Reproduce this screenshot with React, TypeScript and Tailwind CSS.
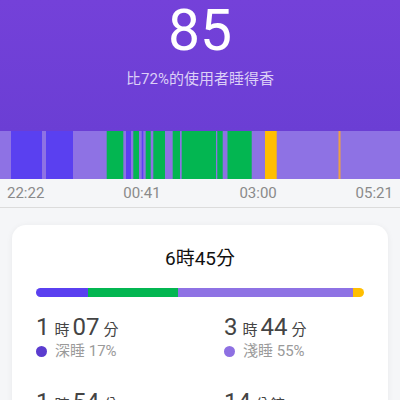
import React from 'react';

const segments: { x: number; w: number; c: string }[] = [
  { x: 11, w: 31, c: '#5a40f0' },
  { x: 46, w: 27, c: '#5a40f0' },
  { x: 106.7, w: 16.6, c: '#03b651' },
  { x: 126, w: 5, c: '#5a40f0' },
  { x: 133.3, w: 5.7, c: '#03b651' },
  { x: 141.7, w: 1.6, c: '#5a40f0' },
  { x: 145.7, w: 5, c: '#03b651' },
  { x: 153.3, w: 11.7, c: '#03b651' },
  { x: 172.7, w: 7.3, c: '#03b651' },
  { x: 181.7, w: 34.3, c: '#03b651' },
  { x: 217.3, w: 5.4, c: '#03b651' },
  { x: 227.5, w: 24.2, c: '#03b651' },
  { x: 265, w: 11.7, c: '#ffbe00' },
  { x: 338.5, w: 2, c: '#f0a040' },
];

const SleepChart = () => (
  <svg width="400" height="48" viewBox="0 0 400 48" className="block">
    <rect x="0" y="0" width="400" height="48" fill="#8e72e4" />
    {segments.map((s, i) => (
      <rect key={i} x={s.x} y="0" width={s.w} height="48" fill={s.c} />
    ))}
  </svg>
);

const Stat = ({
  h,
  m,
  unit,
  dot,
  label,
}: {
  h?: string;
  m: string;
  unit: string;
  dot: string;
  label: string;
}) => (
  <div className="flex flex-col">
    <div className="flex items-baseline text-[#444] h-[28px]">
      {h && (
        <>
          <span className="text-[24px] leading-[28px]">{h}</span>
          <span className="text-[15px] ml-[5px] mr-[3px]">時</span>
        </>
      )}
      <span className="text-[24px] leading-[28px]">{m}</span>
      <span className="text-[15px] ml-[4px]">{unit}</span>
    </div>
    <div className="flex items-center h-[20px] gap-[8px] text-[15px] text-[#9a9a9a]">
      <span className={`w-[11px] h-[11px] rounded-full ${dot}`} />
      <span>{label}</span>
    </div>
  </div>
);

export default function App() {
  return (
    <div className="w-full min-h-screen bg-[#f5f6f8] font-['Roboto','Noto_Sans_CJK_TC',sans-serif]">
      <header className="h-[131px] bg-gradient-to-b from-[#7441d9] to-[#6b3ed4] flex flex-col items-center pt-[2px]">
        <div className="text-[57px] leading-[57px] font-normal text-white">85</div>
        <div className="mt-[10px] text-[15px] leading-[20px] text-[#dccff7]">比72%的使用者睡得香</div>
      </header>

      <SleepChart />

      <div className="h-[29px] flex items-center justify-between px-[7px] border-b border-[#dcdcdc] text-[15px] text-[#8a8a8a]">
        <span>22:22</span>
        <span>00:41</span>
        <span>03:00</span>
        <span>05:21</span>
      </div>

      <div className="px-3 pt-[17px]">
        <div className="bg-white rounded-[14px] shadow-[0_1px_6px_rgba(0,0,0,0.06)] px-6 pt-[21px] pb-10">
          <div className="text-center text-[19px] leading-[26px] text-[#111]">6時45分</div>

          <div className="mt-[16px] h-[9px] flex rounded-full overflow-hidden">
            <div className="w-[52px] bg-[#5a40f0]" />
            <div className="w-[90px] bg-[#03b651]" />
            <div className="w-[175px] bg-[#8e72e4]" />
            <div className="flex-1 bg-[#ffbe00]" />
          </div>

          <div className="mt-[16px] grid grid-cols-[188px_1fr] gap-y-[27px]">
            <Stat h="1" m="07" unit="分" dot="bg-[#5b3ccf]" label="深睡 17%" />
            <Stat h="3" m="44" unit="分" dot="bg-[#8e70e2]" label="淺睡 55%" />
            <Stat h="1" m="54" unit="分" dot="bg-[#03b651]" label="快速動眼 28%" />
            <Stat m="14" unit="分鐘" dot="bg-[#ffbe00]" label="清醒 1次" />
          </div>
        </div>
      </div>
    </div>
  );
}
